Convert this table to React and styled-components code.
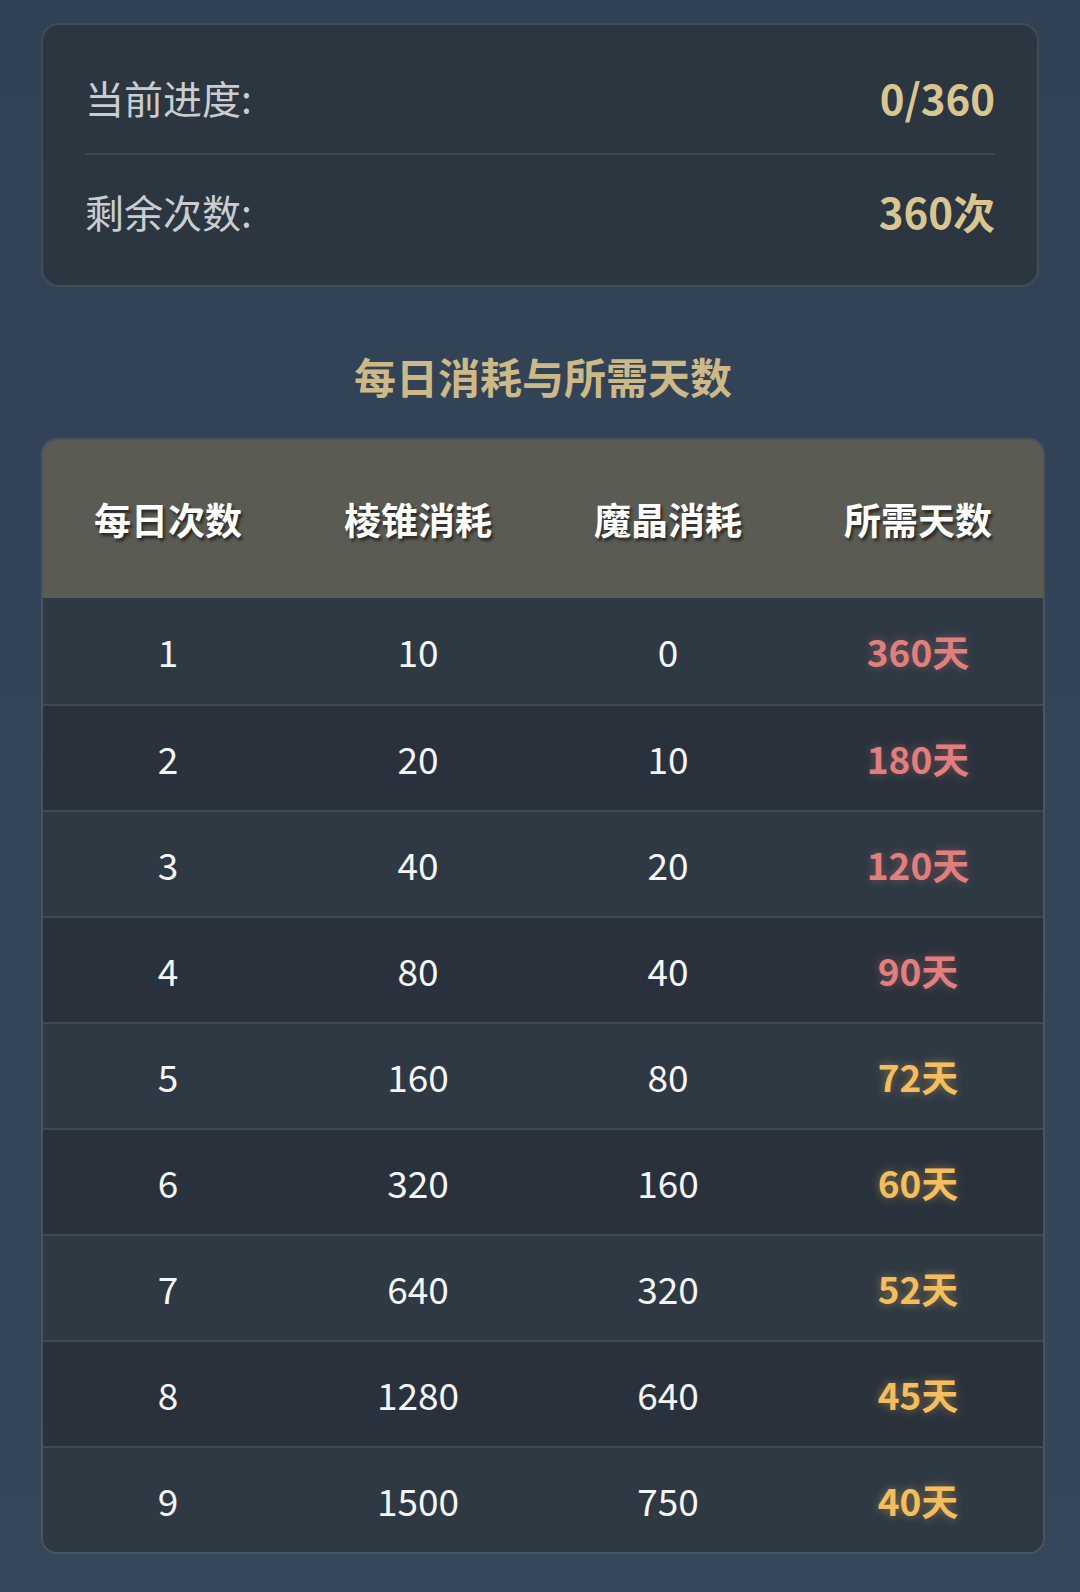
import React from 'react'
import styled, { createGlobalStyle } from 'styled-components'

const GlobalStyle = createGlobalStyle`
  html, body {
    margin: 0;
    padding: 0;
    background: linear-gradient(180deg, #324256 0%, #35475a 100%);
    font-family: "Noto Sans CJK SC", "Noto Sans", sans-serif;
  }
`;
const Page = styled.div`
  width: 1080px;
  min-height: 1592px;
  box-sizing: border-box;
  padding: 23px 35px 0 41px;
  display: flex;
  flex-direction: column;
`;
const InfoCard = styled.div`
  margin-right: 6px;
  background: #2c3640;
  border: 2px solid #404c58;
  border-radius: 18px;
  padding: 16px 42px 18px;
`;
const InfoRow = styled.div`
  display: flex;
  justify-content: space-between;
  align-items: center;
  padding: 28px 0;
  line-height: 56px;
  border-top: ${({ $divider }) => ($divider ? '2px solid #3d4853' : 'none')};
`;
const Label = styled.span`
  font-size: 39px;
  color: #c9cdd1;
`;
const Value = styled.span`
  font-size: 42px;
  font-weight: 700;
  color: #d9c592;
`;
const Title = styled.h2`
  margin: 59px 0 32px;
  text-align: center;
  font-size: 42px;
  line-height: 60px;
  font-weight: 700;
  color: #cdb887;
`;
const Table = styled.div`
  border: 2px solid #4a545e;
  border-radius: 16px;
  overflow: hidden;
  margin-bottom: 39px;
`;
const Header = styled.div`
  display: grid;
  grid-template-columns: repeat(4, 1fr);
  align-items: center;
  height: 158px;
  background: #5a5b52;
`;
const HeadCell = styled.div`
  text-align: center;
  font-size: 37px;
  font-weight: 700;
  color: #ffffff;
  text-shadow: 2px 3px 3px rgba(0, 0, 0, 0.55);
`;
const Row = styled.div`
  display: grid;
  grid-template-columns: repeat(4, 1fr);
  align-items: center;
  height: 104px;
  border-top: 2px solid #3f4a55;
  background: ${({ $odd }) => ($odd ? '#2e3944' : '#29323c')};
  &:first-of-type {
    border-top: none;
    height: 106px;
  }
`;
const Cell = styled.div`
  text-align: center;
  font-size: 37px;
  color: #f4f5f6;
`;
const Days = styled(Cell)`
  font-weight: 700;
  color: ${({ $warm }) => ($warm ? '#f4bd5e' : '#e17f7f')};
  text-shadow: 0 0 10px ${({ $warm }) => ($warm ? 'rgba(244, 189, 94, 0.45)' : 'rgba(225, 127, 127, 0.4)')};
`;

const rows = [
  [1, 10, 0, 360],
  [2, 20, 10, 180],
  [3, 40, 20, 120],
  [4, 80, 40, 90],
  [5, 160, 80, 72],
  [6, 320, 160, 60],
  [7, 640, 320, 52],
  [8, 1280, 640, 45],
  [9, 1500, 750, 40],
];

export default function App() {
  return (
    <>
      <GlobalStyle />
      <Page>
        <InfoCard>
          <InfoRow>
            <Label>当前进度:</Label>
            <Value>0/360</Value>
          </InfoRow>
          <InfoRow $divider>
            <Label>剩余次数:</Label>
            <Value>360次</Value>
          </InfoRow>
        </InfoCard>
        <Title>每日消耗与所需天数</Title>
        <Table>
          <Header>
            <HeadCell>每日次数</HeadCell>
            <HeadCell>棱锥消耗</HeadCell>
            <HeadCell>魔晶消耗</HeadCell>
            <HeadCell>所需天数</HeadCell>
          </Header>
          <div>
            {rows.map(([times, cone, crystal, days], i) => (
              <Row key={times} $odd={i % 2 === 0}>
                <Cell>{times}</Cell>
                <Cell>{cone}</Cell>
                <Cell>{crystal}</Cell>
                <Days $warm={days <= 72}>{days}天</Days>
              </Row>
            ))}
          </div>
        </Table>
      </Page>
    </>
  )
}
